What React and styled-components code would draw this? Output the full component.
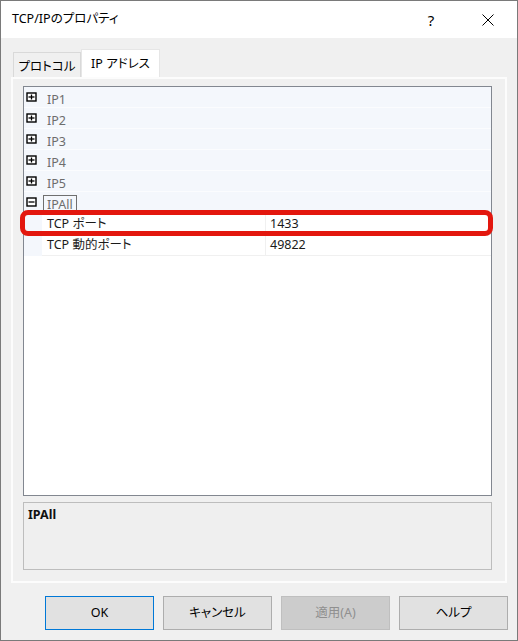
import React from "react";
import styled, { createGlobalStyle } from "styled-components";

const Global = createGlobalStyle`
  html, body { margin: 0; padding: 0; background: #f0f0f0; }
  body {
    font-family: "Noto Sans", "Noto Sans CJK JP", sans-serif;
    font-size: 12px;
    color: #000;
    font-feature-settings: "palt";
  }
  * { box-sizing: border-box; }
`;

const Window = styled.div`
  width: 518px;
  height: 641px;
  border: 1px solid #7a7a7a;
  background: #f0f0f0;
  display: flex;
  flex-direction: column;
`;

const TitleBar = styled.div`
  height: 37px;
  flex-shrink: 0;
  background: #fff;
  display: flex;
  align-items: center;
  padding-left: 11px;
  padding-right: 6px;
`;

const Title = styled.div`
  flex: 1;
  font-size: 12.5px;
  line-height: 16px;
  padding-bottom: 1px;
`;

const CaptionButton = styled.div`
  width: 46px;
  height: 37px;
  display: flex;
  align-items: center;
  justify-content: center;
  font-size: 15px;
  margin-left: ${(p) => p.$gap || 0}px;
`;

const Body = styled.div`
  flex: 1;
  display: flex;
  flex-direction: column;
  padding-top: 11px;
`;

const TabRow = styled.div`
  height: 28px;
  display: flex;
  align-items: flex-end;
  padding-left: 12px;
`;

const Tab = styled.div`
  width: ${(p) => (p.$active ? 79 : 68)}px;
  height: ${(p) => (p.$active ? 28 : 25)}px;
  background: ${(p) => (p.$active ? "#ffffff" : "#f0f0f0")};
  border: 1px solid ${(p) => (p.$active ? "#e6e6e6" : "#d9d9d9")};
  border-bottom: none;
  display: flex;
  justify-content: center;
  align-items: center;
  font-size: 12.5px;
  line-height: 16px;
  padding-top: ${(p) => (p.$active ? 0 : 3)}px;
  white-space: nowrap;
`;

const Panel = styled.div`
  margin-left: 10px;
  width: 496px;
  height: 506px;
  border: 2px solid #fcfcfc;
  background: #f0f0f0;
  padding: 7px 13px 11px 10px;
  display: flex;
  flex-direction: column;
  gap: 6px;
`;

const Grid = styled.div`
  position: relative;
  width: 469px;
  height: 410px;
  border: 1px solid #828790;
  background: #fff;
  font-size: 12.5px;
`;

const CategoryRow = styled.div`
  height: 21px;
  background: #f4f7fc;
  border-bottom: 1px solid #fbfcfe;
  display: flex;
  align-items: flex-start;
`;

const Gutter = styled.div`
  width: 18px;
  height: 100%;
  flex-shrink: 0;
  padding: 5px 0 0 2px;
  background: #f4f7fc;
`;

const CatLabel = styled.span`
  display: inline-block;
  margin-left: 1px;
  margin-top: 3px;
  height: 19px;
  padding: 0 3px;
  line-height: 17px;
  color: #6d6d6d;
  border: 1px solid ${(p) => (p.$focused ? "#6f6f6f" : "transparent")};
  position: relative;
  z-index: 1;
`;

const PropRow = styled.div`
  height: 21px;
  display: grid;
  grid-template-columns: 18px 223px 1px 1fr;
`;

const Cell = styled.div`
  line-height: 20px;
  padding-top: 1px;
  padding-left: ${(p) => p.$pad || 0}px;
  border-bottom: 1px solid #f0f0f0;
  color: #1a1a1a;
  white-space: nowrap;
`;

const Sep = styled.div`
  background: #f0f0f0;
`;

const Highlight = styled.div`
  position: absolute;
  left: -4px;
  top: 123px;
  width: 473px;
  height: 26px;
  border: 5px solid #e3170e;
  border-radius: 8px;
  pointer-events: none;
  z-index: 2;
`;

const Description = styled.div`
  width: 469px;
  height: 68px;
  border: 1px solid #bdbdbd;
  background: #efefef;
  padding: 4px 4px;
  font-weight: bold;
  font-size: 12.5px;
  line-height: 16px;
  color: #111;
`;

const ButtonRow = styled.div`
  margin-top: 13px;
  padding-left: 44px;
  display: flex;
  gap: 9px;
`;

const Button = styled.div`
  width: 109px;
  height: 34px;
  display: flex;
  align-items: center;
  justify-content: center;
  font-size: 12.5px;
  line-height: 16px;
  background: ${(p) => (p.$disabled ? "#cccccc" : "#e1e1e1")};
  border: 1px solid
    ${(p) => (p.$default ? "#0078d7" : p.$disabled ? "#bfbfbf" : "#adadad")};
  color: ${(p) => (p.$disabled ? "#8f8f8f" : "#000")};
`;

const ExpandIcon = ({ open }) => (
  <svg width="11" height="10" viewBox="0 0 11 10" style={{ display: "block" }}>
    <rect x="1" y="1" width="9" height="8" fill="#fff" stroke="#000" strokeWidth="1.4" />
    <line x1="2.5" y1="5" x2="8.5" y2="5" stroke="#000" strokeWidth="1.3" />
    {!open && <line x1="5.5" y1="2.5" x2="5.5" y2="7.5" stroke="#000" strokeWidth="1.3" />}
  </svg>
);

const CloseIcon = () => (
  <svg width="12" height="12" viewBox="0 0 12 12">
    <line x1="0.5" y1="0.5" x2="11.5" y2="11.5" stroke="#000" strokeWidth="1" />
    <line x1="11.5" y1="0.5" x2="0.5" y2="11.5" stroke="#000" strokeWidth="1" />
  </svg>
);

const categories = ["IP1", "IP2", "IP3", "IP4", "IP5"];
const props = [
  { name: "TCP ポート", value: "1433" },
  { name: "TCP 動的ポート", value: "49822" },
];

export default function App() {
  return (
    <>
      <Global />
      <Window>
        <TitleBar>
          <Title>TCP/IPのプロパティ</Title>
          <CaptionButton>?</CaptionButton>
          <CaptionButton $gap={11}>
            <CloseIcon />
          </CaptionButton>
        </TitleBar>
        <Body>
          <TabRow>
            <Tab>プロトコル</Tab>
            <Tab $active>IP アドレス</Tab>
          </TabRow>
          <Panel>
            <Grid>
              {categories.map((c) => (
                <CategoryRow key={c}>
                  <Gutter>
                    <ExpandIcon />
                  </Gutter>
                  <CatLabel>{c}</CatLabel>
                </CategoryRow>
              ))}
              <CategoryRow>
                <Gutter>
                  <ExpandIcon open />
                </Gutter>
                <CatLabel $focused>IPAll</CatLabel>
              </CategoryRow>
              {props.map((p) => (
                <PropRow key={p.name}>
                  <Gutter />
                  <Cell $pad={5}>{p.name}</Cell>
                  <Sep />
                  <Cell $pad={4}>{p.value}</Cell>
                </PropRow>
              ))}
              <Highlight />
            </Grid>
            <Description>IPAll</Description>
          </Panel>
          <ButtonRow>
            <Button $default>OK</Button>
            <Button>キャンセル</Button>
            <Button $disabled>適用(A)</Button>
            <Button>ヘルプ</Button>
          </ButtonRow>
        </Body>
      </Window>
    </>
  );
}
